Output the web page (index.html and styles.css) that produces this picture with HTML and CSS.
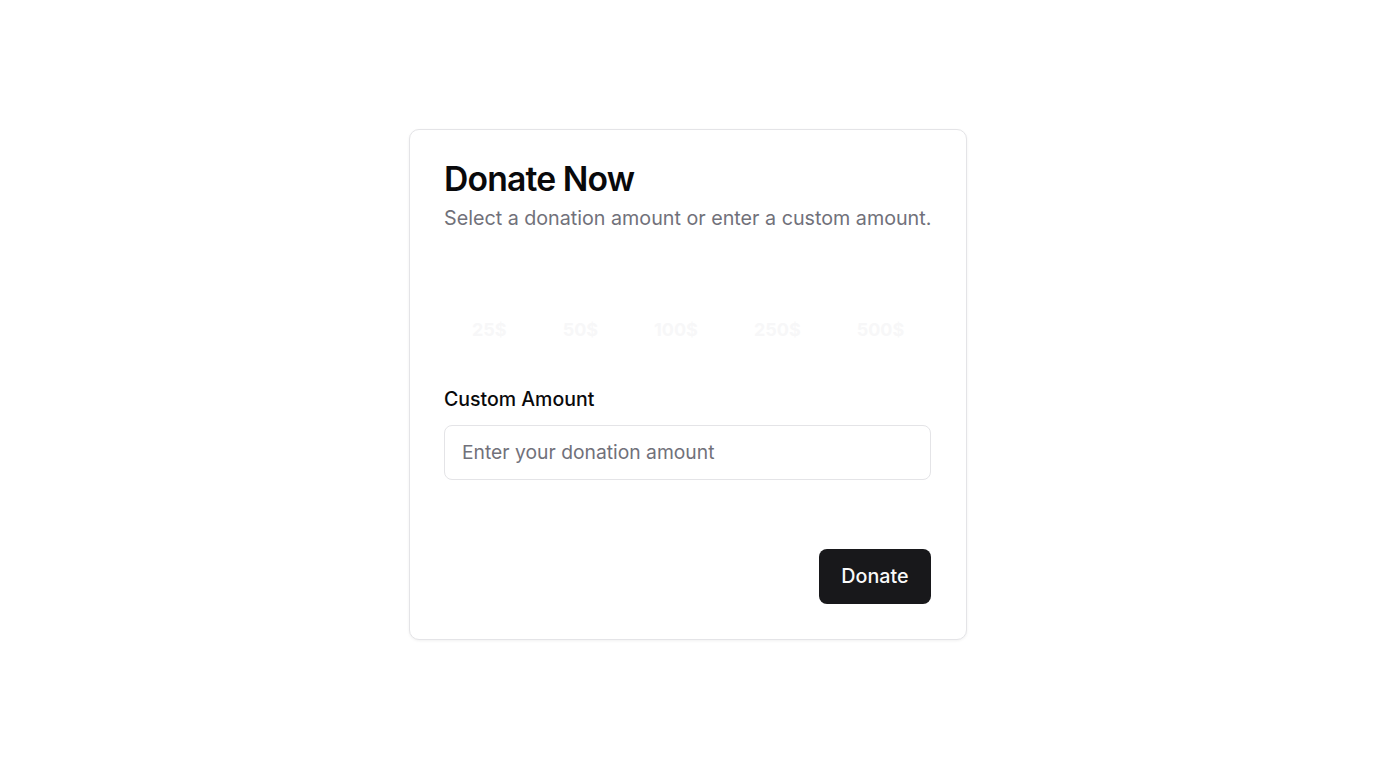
FILE: index.html
```html
<!DOCTYPE html>
<html lang="en">
<head>
<meta charset="utf-8">
<title>Donate Now</title>
<link rel="stylesheet" href="styles.css">
</head>
<body>
<main class="page">
  <section class="card">
    <header class="card-header">
      <h1 class="title">Donate Now</h1>
      <p class="subtitle">Select a donation amount or enter a custom amount.</p>
    </header>
    <div class="amounts">
      <button class="amount" type="button">25$</button>
      <button class="amount" type="button">50$</button>
      <button class="amount" type="button">100$</button>
      <button class="amount" type="button">250$</button>
      <button class="amount" type="button">500$</button>
    </div>
    <div class="field">
      <label class="label" for="custom">Custom Amount</label>
      <input class="input" id="custom" type="text" placeholder="Enter your donation amount">
    </div>
    <footer class="card-footer">
      <button class="donate" type="button">Donate</button>
    </footer>
  </section>
</main>
</body>
</html>
```

FILE: styles.css
```css
* { box-sizing: border-box; }
html, body { margin: 0; padding: 0; background: #ffffff; }
body {
  font-family: Inter, "Noto Sans", "Liberation Sans", sans-serif;
  color: #09090b;
}
.page {
  min-height: 768px;
  display: flex;
  align-items: center;
  justify-content: center;
}
.card {
  width: 558px;
  border: 1px solid #e4e4e7;
  border-radius: 10px;
  box-shadow: 0 1px 3px rgba(0,0,0,0.06);
  padding: 28px 35px 35px 34px;
  display: flex;
  flex-direction: column;
  background: #fff;
}
.card-header { display: flex; flex-direction: column; gap: 4px; }
.title {
  margin: 0;
  font-size: 33.7px;
  line-height: 42px;
  font-weight: 600;
  letter-spacing: -0.025em;
  color: #09090b;
}
.subtitle {
  margin: 0;
  font-size: 19.72px;
  line-height: 28px;
  color: #71717a;
  white-space: nowrap;
}
.amounts {
  margin-top: 80px;
  display: flex;
  justify-content: space-between;
}
.amount {
  font-family: inherit;
  font-size: 18px;
  font-weight: 700;
  line-height: 24px;
  color: #f7f7f8;
  background: transparent;
  border: none;
  padding: 6px 28px;
  cursor: pointer;
}
.field {
  margin-top: 39px;
  display: flex;
  flex-direction: column;
  gap: 14px;
}
.label {
  font-size: 19.5px;
  font-weight: 500;
  line-height: 24px;
  color: #09090b;
}
.input {
  height: 55px;
  width: 100%;
  border: 1px solid #e4e4e7;
  border-radius: 8px;
  padding: 0 17px;
  font-family: inherit;
  font-size: 19.3px;
  color: #09090b;
  background: #fff;
  outline: none;
}
.input::placeholder { color: #71717a; }
.card-footer {
  margin-top: 69px;
  display: flex;
  justify-content: flex-end;
}
.donate {
  height: 55px;
  padding: 0 22.5px;
  border: none;
  border-radius: 8px;
  background: #18181b;
  color: #fafafa;
  font-family: inherit;
  font-size: 19.7px;
  font-weight: 500;
  cursor: pointer;
}
```
